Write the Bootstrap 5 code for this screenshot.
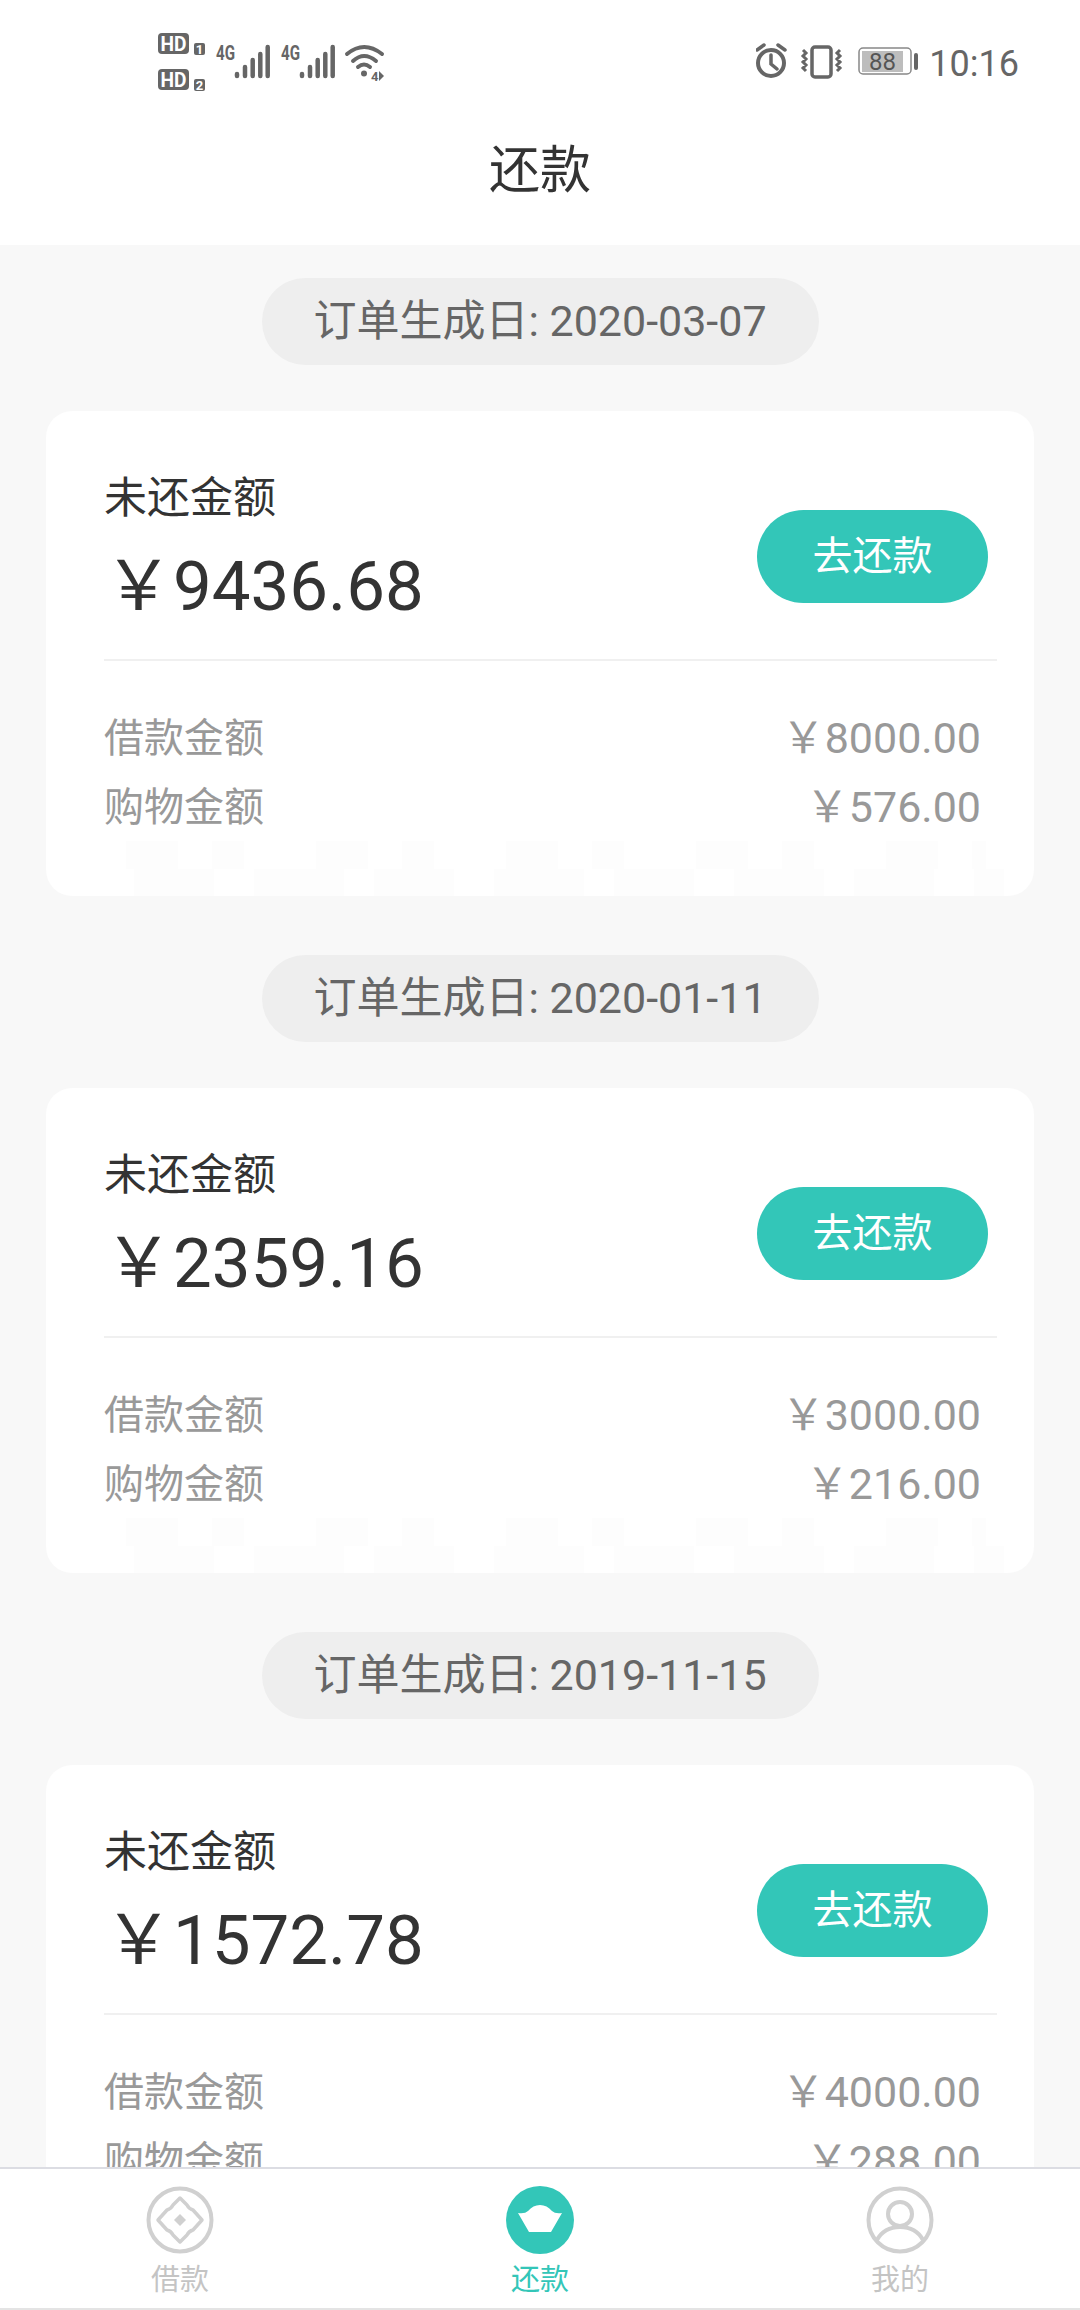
<!DOCTYPE html>
<html lang="zh-CN">
<head>
    <meta charset="UTF-8">
    <meta name="viewport" content="width=device-width, initial-scale=1.0">
    <title>还款</title>
    <link href="https://cdn.jsdelivr.net/npm/bootstrap@5.3.3/dist/css/bootstrap.min.css" rel="stylesheet">
    <style>
        body {
            font-family: Roboto, "Noto Sans CJK SC", sans-serif;
            background: #f8f8f8;
            color: #333;
        }

        .screen {
            height: 2310px;
            overflow: hidden;
        }

        .status-bar {
            height: 110px;
            padding: 10px 61px 0 130px;
        }

        .clock-time {
            font-size: 36px;
            color: #666;
            margin-top: 8px;
        }

        .title-bar {
            height: 135px;
            font-size: 51px;
            padding-bottom: 13px;
        }

        .order-list {
            min-height: 0;
            padding: 33px 46px 0;
        }

        .date-pill {
            width: 557px;
            height: 87px;
            margin-bottom: 46px;
            background: #eeeeee;
            border-radius: 44px;
            color: #666;
            font-size: 43px;
        }

        .order-card {
            width: 988px;
            height: 485px;
            margin-bottom: 59px;
            border-radius: 26px;
            padding: 0 37px 0 58px;
            /* faint smudge left by the blurred row at the bottom of the card */
            background-image:
                repeating-linear-gradient(90deg, #fdfdfd 0 52px, #fff 52px 86px, #fdfdfd 86px 118px, #fff 118px 190px),
                repeating-linear-gradient(90deg, #fff 0 30px, #fdfdfd 30px 110px, #fff 110px 150px, #fdfdfd 150px 240px);
            background-size: 860px 28px, 900px 28px;
            background-position: 80px 430px, 58px 458px;
            background-repeat: no-repeat;
        }

        .card-top {
            height: 250px;
            border-bottom: 2px solid #f0f0f0;
        }

        .due-label {
            margin-top: 57px;
            font-size: 43px;
            line-height: 60px;
        }

        .due-amount {
            font-size: 69px;
            line-height: 84px;
            margin-top: 17px;
        }

        .pay-btn {
            width: 231px;
            height: 93px;
            margin: 99px 9px 0 0;
            border-radius: 47px;
            background: #33c6b8;
            border: 0;
            color: #fff;
            font-size: 40px;
            padding: 0;
        }

        .money-rows {
            padding: 43px 16px 0 0;
            color: #999;
            font-size: 43px;
            line-height: 69px;
        }

        .row-label {
            font-size: 40px;
        }

        .tab-bar {
            height: 143px;
            border-top: 2px solid #dcdde3;
            border-bottom: 2px solid #e4e4e4;
            padding-top: 17px;
        }

        .tab-item {
            width: 360px;
            color: #c4c4c4;
            font-size: 29px;
            line-height: 40px;
        }

        .tab-item svg {
            margin-bottom: 6px;
        }

        .tab-active {
            color: #33c6b8;
        }
    </style>
</head>

<body>
    <div class="screen d-flex flex-column">
        <div class="status-bar bg-white d-flex justify-content-between align-items-center flex-shrink-0">
            <svg width="300" height="100" viewBox="0 0 300 100">
                <rect x="28" y="23" width="31" height="21" rx="4" fill="#666" />
                <text x="30.500" y="40.500" font-size="20" font-weight="700" fill="#fff" font-family="Roboto" textLength="26" lengthAdjust="spacingAndGlyphs">HD</text>
                <rect x="64" y="33" width="11" height="12" rx="2" fill="#666" />
                <text x="69.500" y="43.500" font-size="13" font-weight="700" fill="#fff" text-anchor="middle" font-family="Roboto">1</text>
                <rect x="28" y="59" width="31" height="21" rx="4" fill="#666" />
                <text x="30.500" y="76.500" font-size="20" font-weight="700" fill="#fff" font-family="Roboto" textLength="26" lengthAdjust="spacingAndGlyphs">HD</text>
                <rect x="64" y="69" width="11" height="12" rx="2" fill="#666" />
                <text x="69.500" y="79.500" font-size="13" font-weight="700" fill="#fff" text-anchor="middle" font-family="Roboto">2</text>

                <g fill="#666" font-family="Roboto" font-weight="700" font-size="20">
                    <text x="86" y="50" textLength="19" lengthAdjust="spacingAndGlyphs">4G</text>
                    <text x="151" y="50" textLength="19" lengthAdjust="spacingAndGlyphs">4G</text>
                </g>
                <g stroke="#666" stroke-width="4.500" stroke-linecap="round">
                    <path d="M107 64v2M115 57v9M122.700 50v16M130.300 44v22M137.700 37v29" />
                    <path d="M172 64v2M180 57v9M187.700 50v16M195.300 44v22M202.700 37v29" />
                </g>
                <g fill="none" stroke="#666" stroke-width="4" stroke-linecap="round">
                    <path d="M217 44Q234 30 252 44" />
                    <path d="M223 51Q234 41 246 51" />
                    <path d="M228 57Q234 52 240 57" />
                </g>
                <circle cx="234" cy="63.500" r="3" fill="#666" />
                <text x="241" y="71" font-size="13" font-weight="700" fill="#666" font-family="Roboto">4</text>
                <path d="M249 61v10l5-5z" fill="#666" />
            </svg>
            <div class="d-flex align-items-center">
                <svg width="173" height="80" viewBox="28 0 173 80">
                    <circle cx="43" cy="43" r="13" fill="none" stroke="#666" stroke-width="4" />
                    <path d="M43 35v9l6 5M29 30l7-5M57 30l-7-5" fill="none" stroke="#666" stroke-width="3.500" stroke-linecap="round" />
                    <rect x="84" y="27" width="19" height="30" rx="3" fill="none" stroke="#666" stroke-width="3.500" />
                    <path d="M75 30l3 3-3 3 3 3-3 3 3 3-3 3 3 3M112 30l-3 3 3 3-3 3 3 3-3 3 3 3-3 3" fill="none" stroke="#666" stroke-width="3" />
                    <rect x="131" y="28" width="52" height="26" rx="4" fill="#fff" stroke="#888" stroke-width="1.500" />
                    <rect x="134" y="31" width="41" height="21" fill="#bdbdbd" />
                    <text x="154.500" y="50" font-size="24" fill="#555" text-anchor="middle" font-family="Roboto">88</text>
                    <rect x="186" y="33" width="4" height="17" rx="2" fill="#666" />
                </svg>
                <span class="clock-time">10:16</span>
            </div>
        </div>

        <div class="title-bar bg-white d-flex justify-content-center align-items-center flex-shrink-0">还款</div>

        <div class="order-list flex-grow-1 overflow-hidden d-flex flex-column align-items-center">
            <div class="date-pill d-flex justify-content-center align-items-center flex-shrink-0">订单生成日: 2020-03-07</div>
            <div class="order-card bg-white flex-shrink-0">
                <div class="card-top d-flex justify-content-between align-items-start">
                    <div>
                        <div class="due-label">未还金额</div>
                        <div class="due-amount">￥9436.68</div>
                    </div>
                    <button class="btn pay-btn" type="button">去还款</button>
                </div>
                <div class="money-rows">
                    <div class="d-flex justify-content-between"><span class="row-label">借款金额</span><span>￥8000.00</span></div>
                    <div class="d-flex justify-content-between"><span class="row-label">购物金额</span><span>￥576.00</span></div>
                </div>
            </div>

            <div class="date-pill d-flex justify-content-center align-items-center flex-shrink-0">订单生成日: 2020-01-11</div>
            <div class="order-card bg-white flex-shrink-0">
                <div class="card-top d-flex justify-content-between align-items-start">
                    <div>
                        <div class="due-label">未还金额</div>
                        <div class="due-amount">￥2359.16</div>
                    </div>
                    <button class="btn pay-btn" type="button">去还款</button>
                </div>
                <div class="money-rows">
                    <div class="d-flex justify-content-between"><span class="row-label">借款金额</span><span>￥3000.00</span></div>
                    <div class="d-flex justify-content-between"><span class="row-label">购物金额</span><span>￥216.00</span></div>
                </div>
            </div>

            <div class="date-pill d-flex justify-content-center align-items-center flex-shrink-0">订单生成日: 2019-11-15</div>
            <div class="order-card bg-white flex-shrink-0">
                <div class="card-top d-flex justify-content-between align-items-start">
                    <div>
                        <div class="due-label">未还金额</div>
                        <div class="due-amount">￥1572.78</div>
                    </div>
                    <button class="btn pay-btn" type="button">去还款</button>
                </div>
                <div class="money-rows">
                    <div class="d-flex justify-content-between"><span class="row-label">借款金额</span><span>￥4000.00</span></div>
                    <div class="d-flex justify-content-between"><span class="row-label">购物金额</span><span>￥288.00</span></div>
                </div>
            </div>
        </div>

        <div class="tab-bar bg-white d-flex flex-shrink-0">
            <div class="tab-item d-flex flex-column align-items-center">
                <svg width="68" height="68" viewBox="0 0 68 68">
                    <circle cx="34" cy="34" r="31.500" fill="none" stroke="#d0d0d0" stroke-width="4" />
                    <path d="M34 12l7 7q2 4 6 5l9 10-9 10q-4 1-6 5l-7 7-7-7q-2-4-6-5l-9-10 9-10q4-1 6-5z" fill="none" stroke="#d0d0d0" stroke-width="3.500" stroke-linejoin="round" />
                    <path d="M34 28l6 6-6 6-6-6z" fill="#d0d0d0" />
                </svg>
                <span>借款</span>
            </div>
            <div class="tab-item tab-active d-flex flex-column align-items-center">
                <svg width="68" height="68" viewBox="0 0 68 68">
                    <circle cx="34" cy="34" r="34" fill="#33c6b8" />
                    <path d="M12 27Q19 28 22 25Q27 19 34 19Q41 19 46 25Q49 28 56 27L45 46H23Z" fill="#fff" />
                </svg>
                <span>还款</span>
            </div>
            <div class="tab-item d-flex flex-column align-items-center">
                <svg width="68" height="68" viewBox="0 0 68 68">
                    <circle cx="34" cy="34" r="31.500" fill="none" stroke="#d0d0d0" stroke-width="4" />
                    <circle cx="34" cy="28" r="12" fill="none" stroke="#d0d0d0" stroke-width="4" />
                    <path d="M11 54Q18 41 34 41Q50 41 57 54" fill="none" stroke="#d0d0d0" stroke-width="4" />
                </svg>
                <span>我的</span>
            </div>
        </div>
    </div>
    <script src="https://cdn.jsdelivr.net/npm/bootstrap@5.3.3/dist/js/bootstrap.bundle.min.js"></script>
</body>

</html>
